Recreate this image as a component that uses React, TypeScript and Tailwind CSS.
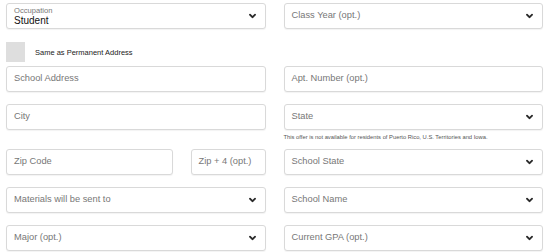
import { FC, ReactNode } from "react"

const font = "font-['Liberation_Sans','Helvetica',Arial,sans-serif]"

const Chevron: FC = () => (
  <svg width="7" height="5" viewBox="0 0 7 5" className="absolute right-[9px] top-1/2 -translate-y-1/2">
    <path d="M1 1.2 L3.5 3.7 L6 1.2" fill="none" stroke="#2a2a2a" strokeWidth="1.7" strokeLinecap="square" />
  </svg>
)

const Field: FC<{ label: string; select?: boolean; className?: string }> = ({ label, select, className = "" }) => (
  <div className={`relative flex h-[26px] items-center rounded-[3px] border border-[#d9d9d9] bg-white pl-[7px] shadow-[0_1px_1px_rgba(0,0,0,0.05)] ${className}`}>
    <span className="text-[9.3px] leading-none text-[#777]">{label}</span>
    {select && <Chevron />}
  </div>
)

const Row: FC<{ children: ReactNode; className?: string }> = ({ children, className = "" }) => (
  <div className={`grid grid-cols-2 gap-x-[18px] ${className}`}>{children}</div>
)

export default function App() {
  return (
    <div className={`${font} h-[252px] w-[550px] overflow-hidden bg-white pl-[6px] pr-[7px] pt-[3px]`}>
      <Row>
        <div className="relative flex h-[26px] flex-col justify-center rounded-[3px] border border-[#d9d9d9] bg-white pl-[7px] shadow-[0_1px_1px_rgba(0,0,0,0.05)]">
          <span className="text-[7.6px] leading-[8px] text-[#777]">Occupation</span>
          <span className="text-[10px] leading-[11px] text-[#111]">Student</span>
          <Chevron />
        </div>
        <Field label="Class Year (opt.)" select />
      </Row>

      <div className="mt-[13px] flex h-[20px] items-center">
        <div className="h-[20px] w-[19px] bg-[#dedede]" />
        <span className="ml-[10px] mt-[2px] text-[7.5px] leading-none text-[#222]">Same as Permanent Address</span>
      </div>

      <Row className="mt-[4px]">
        <Field label="School Address" />
        <Field label="Apt. Number (opt.)" />
      </Row>

      <Row className="mt-[12px]">
        <Field label="City" />
        <Field label="State" select />
      </Row>

      <Row>
        <div />
        <p className="mt-[3px] h-[16px] whitespace-nowrap text-[5.8px] leading-[8px] text-[#555]">
          This offer is not available for residents of Puerto Rico, U.S. Territories and Iowa.
        </p>
      </Row>

      <Row>
        <div className="flex gap-x-[18px]">
          <Field label="Zip Code" className="flex-1" />
          <Field label="Zip + 4 (opt.)" className="w-[75px]" />
        </div>
        <Field label="School State" select />
      </Row>

      <Row className="mt-[12px]">
        <Field label="Materials will be sent to" select />
        <Field label="School Name" select />
      </Row>

      <Row className="mt-[12px]">
        <Field label="Major (opt.)" select />
        <Field label="Current GPA (opt.)" select />
      </Row>
    </div>
  )
}
